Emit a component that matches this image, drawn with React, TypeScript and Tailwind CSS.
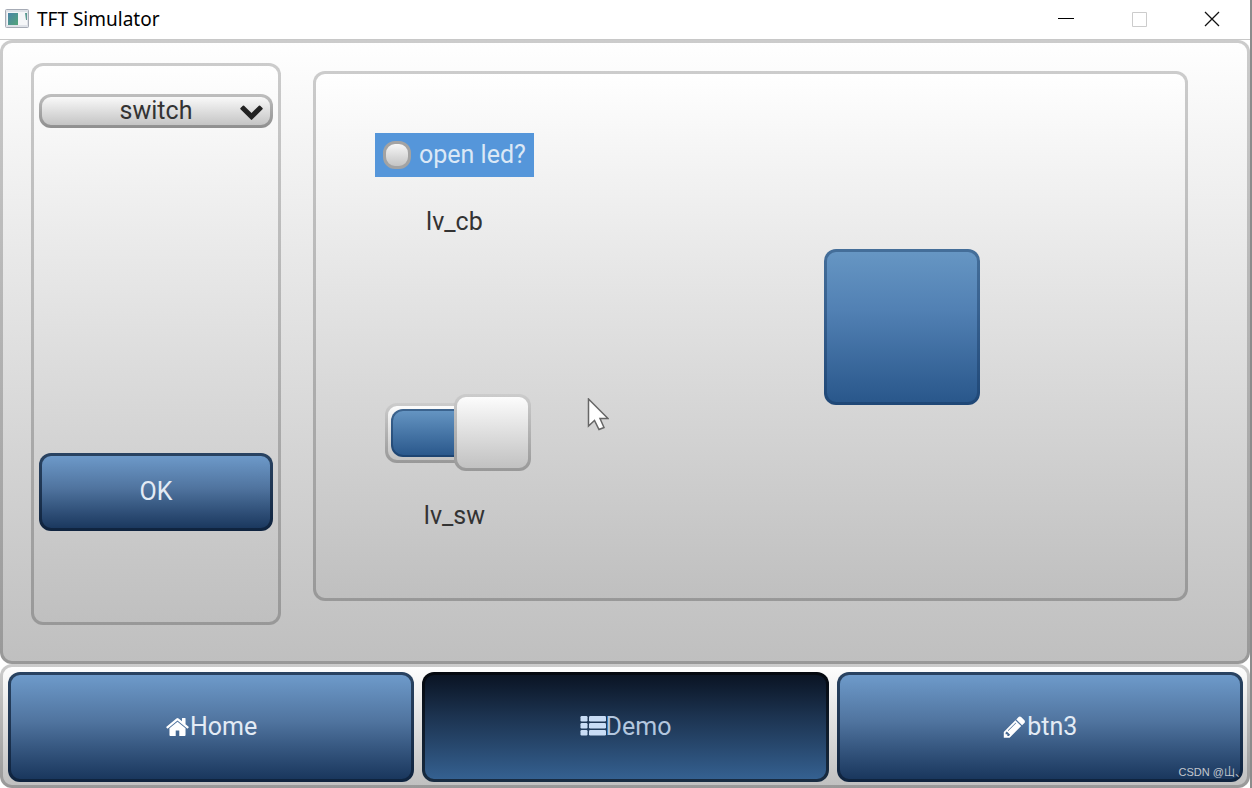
import { useState } from 'react';

function HomeIcon() {
    return (
        <svg viewBox="0 0 1792 1792" className="w-[25px] h-[26px] text-white" fill="currentColor" aria-hidden="true">
            <path d="M1472 992v480q0 26-19 45t-45 19h-384v-384h-256v384h-384q-26 0-45-19t-19-45v-480q0-1 .5-3t.5-3l575-474 575 474q1 2 1 6zm223-69l-62 74q-8 9-21 11h-3q-13 0-21-7l-692-577-692 577q-12 8-24 7-13-2-21-11l-62-74q-8-10-7-23.500t11-21.500l719-599q32-26 76-26t76 26l244 204v-195q0-14 9-23t23-9h192q14 0 23 9t9 23v408l219 182q10 8 11 21.500t-7 23.500z" />
        </svg>
    );
}

function ListIcon() {
    return (
        <svg viewBox="0 0 26 26" className="w-[26px] h-[26px] text-[#c9ddf6]" fill="currentColor" aria-hidden="true">
            {[2, 9, 16].map((y) => (
                <g key={y}>
                    <rect x="0.500" y={y} width="7" height="5.500" rx="1.200" />
                    <rect x="9" y={y} width="17" height="5.500" rx="1.200" />
                </g>
            ))}
        </svg>
    );
}

function PencilIcon() {
    return (
        <svg viewBox="0 0 1792 1792" className="w-[25px] h-[26px] text-white" fill="currentColor" aria-hidden="true">
            <path d="M491 1536l91-91-235-235-91 91v107h128v128h107zm523-928q0-22-22-22-10 0-17 7l-542 542q-7 7-7 17 0 22 22 22 10 0 17-7l542-542q7-7 7-17zm-54-192l416 416-832 832h-416v-416zm683 96q0 53-37 90l-166 166-416-416 166-165q36-38 90-38 53 0 91 38l235 234q37 39 37 91z" />
        </svg>
    );
}

const panel = 'border-3 border-black/20 rounded-xl bg-linear-to-b from-white to-[#bfbfbf] bg-origin-border';
const blueButton =
    'border-3 border-[#0b1c33]/70 rounded-xl bg-linear-to-b from-[#709dcd] via-[#50749f] via-45% to-[#17345a] bg-origin-border text-[#e3ebf5]';
const activeButton =
    'border-3 border-black/55 rounded-xl bg-linear-to-b from-[#091221] via-[#1c3350] via-40% to-[#366394] bg-origin-border text-[#b3c7df]';

const tabs = [
    { name: 'Home', icon: <HomeIcon /> },
    { name: 'Demo', icon: <ListIcon /> },
    { name: 'btn3', icon: <PencilIcon /> },
];

function TitleBar() {
    return (
        <header className="flex items-center justify-between h-10 pl-[5px] pr-[30px] pb-0.5 bg-white border-b border-[#c8c8c8]">
            <div className="flex items-center gap-2">
                <svg viewBox="0 0 24 19" className="w-6 h-[19px]" aria-hidden="true">
                    <defs>
                        <linearGradient id="screen" x1="0" y1="0" x2="1" y2="1">
                            <stop offset="0" stopColor="#4a84a8" />
                            <stop offset="1" stopColor="#53a578" />
                        </linearGradient>
                    </defs>
                    <rect x="0.500" y="0.500" width="23" height="18" rx="1" fill="#dfe2e8" stroke="#a6abb5" />
                    <rect x="2" y="3" width="20" height="13" fill="#f5f6f8" />
                    <rect x="3" y="4" width="10" height="12" fill="url(#screen)" />
                    <path d="M20 4h2v7h-1z" fill="#5a9a90" />
                </svg>
                <h1 className="font-['Noto_Sans',sans-serif] text-[19px] leading-6 text-black">TFT Simulator</h1>
            </div>
            <div className="flex items-center gap-[57px]">
                <button aria-label="Minimize">
                    <svg viewBox="0 0 16 16" className="w-4 h-4" stroke="#000" aria-hidden="true">
                        <path d="M0 7.500h16" />
                    </svg>
                </button>
                <button aria-label="Maximize" disabled>
                    <svg viewBox="0 0 16 16" className="w-4 h-4" fill="none" stroke="#ccc" aria-hidden="true">
                        <path d="M1.500 1.500h14v14h-14z" />
                    </svg>
                </button>
                <button aria-label="Close">
                    <svg viewBox="0 0 16 16" className="w-4 h-4" stroke="#111" strokeWidth="1.300" aria-hidden="true">
                        <path d="M1 1l14 14M15 1L1 15" />
                    </svg>
                </button>
            </div>
        </header>
    );
}

function LedSwitch({ on, onChange }: { on: boolean; onChange: (on: boolean) => void }) {
    return (
        <label className="relative flex items-center w-[146px] h-[77px] cursor-pointer">
            <input
                type="checkbox"
                role="switch"
                aria-labelledby="sw-label"
                className="sr-only"
                checked={on}
                onChange={(e) => onChange(e.target.checked)}
            />
            <span className="block w-full h-[60px] p-[3px] border-3 border-black/20 rounded-xl bg-linear-to-b from-white to-[#bfbfbf] bg-origin-border">
                {on && (
                    <span className="block w-20 h-12 border-2 border-[#12325a]/50 rounded-xl bg-linear-to-b from-[#6797c4] to-[#28568a] bg-origin-border" />
                )}
            </span>
            <span
                className={`${panel} absolute top-0 w-[77px] h-[77px] ${on ? 'right-0' : 'left-0'}`}
            />
        </label>
    );
}

function App() {
    const [active, setActive] = useState('Demo');
    const [checked, setChecked] = useState(false);
    const [on, setOn] = useState(true);

    return (
        <div className="relative flex flex-col min-h-screen bg-white border-r-2 border-[#8c8c8c] font-[Roboto,sans-serif] text-[25px] leading-8 text-[#333]">
            <TitleBar />

            <main className={`${panel} flex flex-1 gap-8 pl-7 pr-[59px] pt-5 pb-9`}>
                <section className={`${panel} flex flex-col w-[250px] shrink-0 px-[5px] pt-7`}>
                    <div className="relative">
                        <select
                            aria-label="Widget"
                            className="block w-full h-[34px] pb-0.5 appearance-none text-center [text-align-last:center] leading-7 border-3 border-black/25 rounded-xl bg-linear-to-b from-white to-[#bfbfbf] bg-origin-border"
                        >
                            <option>switch</option>
                        </select>
                        <svg
                            viewBox="0 0 1792 1792"
                            className="absolute right-[9px] top-1 w-[25px] h-[25px] pointer-events-none"
                            fill="#222"
                            aria-hidden="true"
                        >
                            <path d="M1683 808l-742 741q-19 19-45 19t-45-19l-742-741q-19-19-19-45.500t19-45.500l166-165q19-19 45-19t45 19l531 531 531-531q19-19 45-19t45 19l166 165q19 19 19 45.500t-19 45.500z" />
                        </svg>
                    </div>
                    <button className={`${blueButton} h-[78px] mt-auto mb-[91px]`}>OK</button>
                </section>

                <section className={`${panel} relative flex flex-1 justify-between mt-2 mb-6 pl-[59px] pr-[205px]`}>
                    <div className="flex flex-col items-center pt-[59px]">
                        <label className="flex items-center gap-2 h-11 px-2 bg-[#5596da] text-[#dbe8f6]">
                            <input
                                type="checkbox"
                                checked={checked}
                                onChange={(e) => setChecked(e.target.checked)}
                                className="appearance-none w-7 h-7 border-3 border-[#a3a3a3] rounded-xl bg-linear-to-b from-[#f7f7f7] to-[#c4c4c4] checked:from-[#6797c4] checked:to-[#28568a]"
                            />
                            open led?
                        </label>
                        <p className="mt-[29px]">lv_cb</p>
                        <div className="mt-auto pl-2">
                            <LedSwitch on={on} onChange={setOn} />
                        </div>
                        <p id="sw-label" className="mt-[29px] mb-[66px]">lv_sw</p>
                    </div>

                    <div className="self-center w-[156px] h-[156px] mb-[18px] border-3 border-[#12325a]/40 rounded-xl bg-linear-to-b from-[#6797c4] via-[#5180b3] via-40% to-[#28568a] bg-origin-border" />

                    <svg viewBox="0 0 22 34" className="absolute left-[271px] top-[324px] w-[22px] h-[34px]" aria-hidden="true">
                        <path
                            d="M1.500 1v27l6-5.500 4.500 9 5-2-4-9h8z"
                            fill="#fff"
                            stroke="#666"
                            strokeWidth="1.500"
                        />
                    </svg>
                </section>
            </main>

            <nav className={`${panel} grid grid-cols-3 gap-2 h-[124px] pl-[5px] pr-1 pt-[5px] pb-[3px]`}>
                {tabs.map((tab) => (
                    <button
                        key={tab.name}
                        onClick={() => setActive(tab.name)}
                        className={`${active === tab.name ? activeButton : blueButton} flex items-center justify-center`}
                    >
                        {tab.icon}
                        {tab.name}
                    </button>
                ))}
            </nav>

            <span className="absolute right-1 bottom-2 font-['Liberation_Sans','Noto_Sans_CJK_SC',sans-serif] text-[11px] leading-4 text-[#c3c8ce]">
                CSDN @山、
            </span>
        </div>
    );
}

export default App;
